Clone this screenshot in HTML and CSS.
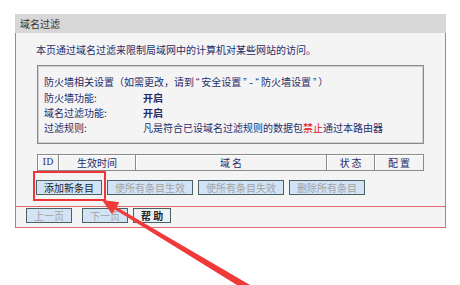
FILE: index.html
```html
<!DOCTYPE html>
<html lang="zh-CN">
<head>
  <meta charset="UTF-8">
  <title>域名过滤</title>
  <link rel="stylesheet" href="styles.css">
</head>
<body>
  <div class="page">
    <!-- Título -->
    <div class="title-bar">域名过滤</div>

    <div class="panel">
      <div class="panel-body">
        <p class="desc">本页通过域名过滤来限制局域网中的计算机对某些网站的访问。</p>

        <!-- Cuadro de ajustes del cortafuegos -->
        <div class="info-box">
          <div class="row">防火墙相关设置（如需更改，请到<span class="q">“</span>安全设置<span class="q">” - “</span>防火墙设置<span class="q">”</span>）</div>
          <div class="row"><span class="label">防火墙功能:</span><b>开启</b></div>
          <div class="row"><span class="label">域名过滤功能:</span><b>开启</b></div>
          <div class="row"><span class="label">过滤规则:</span>凡是符合已设域名过滤规则的数据包<span class="red">禁止</span>通过本路由器</div>
        </div>

        <!-- Tabla de entradas -->
        <table class="list">
          <tr>
            <th class="c-id">ID</th>
            <th class="c-time">生效时间</th>
            <th class="c-domain">域 名</th>
            <th class="c-state">状 态</th>
            <th class="c-conf">配 置</th>
          </tr>
        </table>

        <div class="actions">
          <button class="btn">添加新条目</button>
          <button class="btn" disabled>使所有条目生效</button>
          <button class="btn" disabled>使所有条目失效</button>
          <button class="btn" disabled>删除所有条目</button>
        </div>
      </div>

      <div class="panel-foot">
        <button class="btn" disabled>上一页</button>
        <button class="btn next" disabled>下一页</button>
        <button class="btn help">帮 助</button>
      </div>
    </div>
  </div>

  <!-- Anotaciones en rojo -->
  <div class="mark"></div>
  <svg class="arrow" width="460" height="285" viewBox="0 0 460 285">
    <polygon points="102,200 119.3,202.2 116.5,206.9 251.8,286 248.2,292 114.9,209.5 112.1,214.2" fill="#f03a3a"/>
  </svg>
</body>
</html>
```

FILE: styles.css
```css
/* Generales */
body {
  margin: 0;
  background: #fff;
  font-family: "Noto Sans CJK SC", "Noto Sans", sans-serif;
  font-size: 10px;
  color: #1f2d6b;
  position: relative;
  width: 460px;
  height: 285px;
  overflow: hidden;
}

.page {
  padding: 14px 0 0 15px;
  width: 431px;
}

/* Barra de título */
.title-bar {
  height: 19px;
  line-height: 19px;
  background: #d7d7d7;
  color: #333;
  padding-left: 5px;
}

/* Panel principal */
.panel {
  background: #f4f4f4;
  border: 1px solid #e36a6a;
  border-top: none;
}

.panel-body {
  padding: 9px 21px 11px 20px;
}

.desc {
  margin: 0;
  line-height: 15px;
}

.info-box {
  margin: 8px 0 0 1px;
  padding: 8px 6px;
  border: 1px solid #8a8a8a;
  box-shadow: inset 0 0 0 1px #d0d0d0;
}

.row {
  line-height: 15px;
  white-space: nowrap;
}

/* comillas estrechas */
.q {
  font-family: "Liberation Sans", sans-serif;
  white-space: pre;
  padding: 0 2px;
}

.label {
  display: inline-block;
  width: 99px;
}

.red {
  color: #e01010;
}

/* Tabla */
.list {
  margin: 10px 0 0 1px;
  width: 387px;
  border-collapse: collapse;
}

.list th {
  height: 15px;
  padding: 0;
  border: 1px solid #8a8a8a;
  box-shadow: inset 1px 1px 0 #fff;
  font-weight: normal;
  line-height: 15px;
}

.c-id { width: 20px; font-family: "DejaVu Serif", serif; font-weight: bold; font-size: 9px; }
.c-time { width: 76px; }
.c-state { width: 47px; font-weight: bold; }
.c-conf { width: 48px; font-weight: bold; }

/* Botones */
.actions {
  display: flex;
  gap: 5px;
  margin-top: 9px;
}

.btn {
  height: 15px;
  padding: 0 7px;
  border: 1px solid #4b6262;
  background: #d2e3f6;
  color: #222;
  font-family: inherit;
  font-size: 10px;
  line-height: 13px;
}

.btn:disabled {
  color: #a2a2a2;
}

.panel-foot {
  display: flex;
  gap: 5px;
  padding: 1px 0 4px 10px;
  border-top: 1px solid #e36a6a;
}

.next {
  margin-left: 5px;
}

.help {
  background: #eef1f4;
  font-weight: bold;
}

/* Marcas rojas */
.mark {
  position: absolute;
  left: 33px;
  top: 171px;
  width: 69px;
  height: 26px;
  border: 2px solid #ef3535;
}

.arrow {
  position: absolute;
  left: 0;
  top: 0;
  pointer-events: none;
}
```
